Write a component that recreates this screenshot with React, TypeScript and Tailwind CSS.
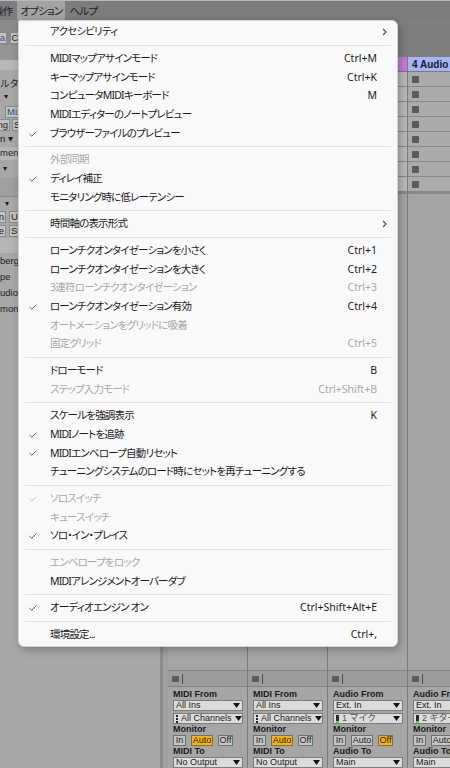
import React from "react";

type Item = {
  label: string;
  shortcut?: string;
  checked?: boolean;
  disabled?: boolean;
  submenu?: boolean;
};

const sections: Item[][] = [
  [{ label: "アクセシビリティ", submenu: true }],
  [
    { label: "MIDIマップアサインモード", shortcut: "Ctrl+M" },
    { label: "キーマップアサインモード", shortcut: "Ctrl+K" },
    { label: "コンピュータMIDIキーボード", shortcut: "M" },
    { label: "MIDIエディターのノートプレビュー" },
    { label: "ブラウザーファイルのプレビュー", checked: true },
  ],
  [
    { label: "外部同期", disabled: true },
    { label: "ディレイ補正", checked: true },
    { label: "モニタリング時に低レーテンシー" },
  ],
  [{ label: "時間軸の表示形式", submenu: true }],
  [
    { label: "ローンチクオンタイゼーションを小さく", shortcut: "Ctrl+1" },
    { label: "ローンチクオンタイゼーションを大きく", shortcut: "Ctrl+2" },
    { label: "3連符ローンチクオンタイゼーション", shortcut: "Ctrl+3", disabled: true },
    { label: "ローンチクオンタイゼーション有効", shortcut: "Ctrl+4", checked: true },
    { label: "オートメーションをグリッドに吸着", disabled: true },
    { label: "固定グリッド", shortcut: "Ctrl+5", disabled: true },
  ],
  [
    { label: "ドローモード", shortcut: "B" },
    { label: "ステップ入力モード", shortcut: "Ctrl+Shift+B", disabled: true },
  ],
  [
    { label: "スケールを強調表示", shortcut: "K" },
    { label: "MIDIノートを追跡", checked: true },
    { label: "MIDIエンベロープ自動リセット", checked: true },
    { label: "チューニングシステムのロード時にセットを再チューニングする" },
  ],
  [
    { label: "ソロスイッチ", checked: true, disabled: true },
    { label: "キュースイッチ", disabled: true },
    { label: "ソロ・イン・プレイス", checked: true },
  ],
  [
    { label: "エンベロープをロック", disabled: true },
    { label: "MIDIアレンジメントオーバーダブ" },
  ],
  [{ label: "オーディオエンジン オン", shortcut: "Ctrl+Shift+Alt+E", checked: true }],
  [{ label: "環境設定...", shortcut: "Ctrl+," }],
];

type Track = {
  name: string;
  color: string;
  slot: string;
  audio: boolean;
  from: string;
  sub: string;
  monitor: "In" | "Auto" | "Off";
  to: string;
};

const tracks: Track[] = [
  { name: "1 MIDI", color: "bg-[#ffa54f]", slot: "bg-[#ababab]", audio: false, from: "All Ins", sub: "All Channels", monitor: "Auto", to: "No Output" },
  { name: "2 MIDI", color: "bg-[#f0dd55]", slot: "bg-[#ababab]", audio: false, from: "All Ins", sub: "All Channels", monitor: "Auto", to: "No Output" },
  { name: "3 Audio", color: "bg-[#c57ad6]", slot: "bg-[#bababa]", audio: true, from: "Ext. In", sub: "1 マイク", monitor: "Off", to: "Main" },
  { name: "4 Audio", color: "bg-[#a6b5fa]", slot: "bg-[#ababab]", audio: true, from: "Ext. In", sub: "2 ギター", monitor: "Off", to: "Main" },
];

const jp = "font-['Noto_Sans','Noto_Sans_CJK_JP',sans-serif] [font-feature-settings:'palt']";

function Check({ dim }: { dim?: boolean }) {
  return (
    <svg width="8" height="6" viewBox="0 0 8 6" className={dim ? "text-[#bdbdbd]" : "text-[#4a4a4a]"}>
      <path d="M0.6 3.1 L2.8 5.2 L7.4 0.6" fill="none" stroke="currentColor" strokeWidth="0.9" />
    </svg>
  );
}

function Chevron() {
  return (
    <svg width="5" height="8" viewBox="0 0 5 8" className="text-[#444]">
      <path d="M1 0.8 L4 4 L1 7.2" fill="none" stroke="currentColor" strokeWidth="1.1" />
    </svg>
  );
}

function MenuItem({ item }: { item: Item }) {
  const color = item.disabled ? "text-[#a8a8a8]" : "text-[#1b1b1b]";
  return (
    <div className={`flex h-[18.67px] items-center pr-[10px] ${color}`}>
      <span className="flex w-[31px] shrink-0 pl-[10px]">{item.checked && <Check dim={item.disabled} />}</span>
      <span className="flex-1 whitespace-nowrap tracking-[-0.8px]">{item.label}</span>
      {item.shortcut && <span className="whitespace-nowrap">{item.shortcut}</span>}
      <span className="flex w-[10px] shrink-0 justify-end">{item.submenu && <Chevron />}</span>
    </div>
  );
}

function OptionsMenu() {
  return (
    <div
      className={`absolute left-[18px] top-[20px] w-[380px] rounded-[6px] rounded-tl-[2px] border border-[#d2d2d2] bg-[#f9f9f9] py-[2px] text-[10.5px] shadow-[2px_3px_8px_rgba(0,0,0,0.28)] ${jp}`}
    >
      {sections.map((sec, i) => (
        <div key={i}>
          {i > 0 && (
            <div className="flex h-[8px] items-center px-[6px]">
              <div className="h-px w-full bg-[#e2e2e2]" />
            </div>
          )}
          {sec.map((item) => (
            <MenuItem key={item.label} item={item} />
          ))}
        </div>
      ))}
    </div>
  );
}

function MenuBar() {
  return (
    <div className={`flex h-[20px] items-stretch border-t border-[#b9b9b9] bg-[#7d7d7d] text-[10.5px] tracking-[-0.8px] text-[#1e1e1e] ${jp}`}>
      <span className="-ml-[7px] flex items-center whitespace-nowrap pt-[2px]">操作</span>
      <span className="ml-[5px] flex w-[48px] items-center justify-center whitespace-nowrap bg-[#a3a3a3] pt-[2px]">オプション</span>
      <span className="ml-[4px] flex items-center whitespace-nowrap pt-[2px]">ヘルプ</span>
    </div>
  );
}

function StripButton({ children, className }: { children: React.ReactNode; className: string }) {
  return (
    <span className={`flex h-[12px] items-center overflow-hidden whitespace-nowrap border border-[#8a8a8a] bg-[#c3c3c3] px-[1px] ${className}`}>
      {children}
    </span>
  );
}

function LeftPanel() {
  return (
    <div className="flex w-[160px] shrink-0 flex-col bg-[#a8a8a8] font-['Liberation_Sans','Noto_Sans_CJK_JP',sans-serif] text-[9.5px] text-[#1c1c1c]">
      <div className="flex h-[25px] items-end gap-[3px] bg-[#8b8b8b] pb-[1px]">
        <StripButton className="-ml-[2px] w-[9px] justify-end bg-[#bcc6d8] text-[#2f58a0]">a</StripButton>
        <StripButton className="w-[10px] justify-center">C</StripButton>
      </div>
      <div className="h-[15px] bg-[#959595]" />
      <div className="h-[10px] bg-[#b8b8b8]" />
      <div className="h-[8px]" />
      <div className="flex h-[12px] items-center whitespace-nowrap">ルター ▾</div>
      <div className="flex h-[14px] items-center pl-[4px] text-[8px]">▾</div>
      <div className="flex h-[14px] items-end pl-[5px]">
        <StripButton className="w-[16px] text-[#2f4f8f]">Mix</StripButton>
      </div>
      <div className="flex h-[14px] items-center gap-[2px]">
        <StripButton className="-ml-[1px] w-[11px] justify-end">ng</StripButton>
        <StripButton className="w-[9px]">S</StripButton>
      </div>
      <div className="flex h-[15px] items-center whitespace-nowrap">n ▾</div>
      <div className="flex h-[13px] items-center whitespace-nowrap bg-[#b6b6b6]">ment</div>
      <div className="flex h-[18px] items-center pl-[3px] text-[8px]">▾</div>
      <div className="h-[19px] border-b border-[#8c8c8c] bg-[#9f9f9f]" />
      <div className="flex h-[13px] items-center pl-[5px] text-[8px]">▾</div>
      <div className="flex h-[14px] items-center gap-[3px]">
        <StripButton className="-ml-[1px] w-[7px] justify-end">n</StripButton>
        <StripButton className="w-[10px]">U</StripButton>
      </div>
      <div className="flex h-[14px] items-center gap-[3px]">
        <StripButton className="-ml-[1px] w-[7px] justify-end">e</StripButton>
        <StripButton className="w-[10px]">St</StripButton>
      </div>
      <div className="h-[15px] bg-[#b5b5b5]" />
      <div className="flex h-[16px] items-center whitespace-nowrap">berg</div>
      <div className="flex h-[16px] items-center whitespace-nowrap">pe</div>
      <div className="flex h-[16px] items-center whitespace-nowrap">udio</div>
      <div className="flex h-[16px] items-center whitespace-nowrap">mony</div>
      <div className="flex-1" />
    </div>
  );
}

function Arrow() {
  return (
    <svg width="7" height="5" viewBox="0 0 7 5" className="shrink-0">
      <path d="M0 0 H7 L3.5 5 Z" fill="#111" />
    </svg>
  );
}

function Dropdown({ label, icon }: { label: string; icon?: "channels" | "meter" }) {
  return (
    <div className="flex h-[11px] items-center gap-[3px] border border-[#7c7c7c] bg-[#dcdcdc] pl-[2px] pr-[2px] leading-none">
      {icon === "channels" && (
        <span className="flex h-[8px] w-[2px] flex-col justify-between">
          <span className="h-[2px] w-[2px] bg-[#222]" />
          <span className="h-[2px] w-[2px] bg-[#222]" />
          <span className="h-[2px] w-[2px] bg-[#222]" />
        </span>
      )}
      {icon === "meter" && (
        <span className="flex h-[8px] w-[3px] flex-col justify-end bg-[#2a2a2a]">
          <span className="h-[2px] w-[3px] bg-[#3ee060]" />
        </span>
      )}
      <span className={`flex-1 whitespace-nowrap ${icon === "meter" ? "text-[#555]" : ""}`}>{label}</span>
      <Arrow />
    </div>
  );
}

function MonitorButton({ label, active, width }: { label: string; active: boolean; width: string }) {
  return (
    <span
      className={`flex h-[11px] items-center justify-center border border-[#707070] leading-none ${width} ${
        active ? "bg-[#fcb400]" : "bg-[#c6c6c6]"
      }`}
    >
      {label}
    </span>
  );
}

function TrackColumn({ track }: { track: Track }) {
  return (
    <div className="flex w-[80px] shrink-0 flex-col border-r-[1.5px] border-[#7b7b7b] font-['Liberation_Sans','Noto_Sans_CJK_JP',sans-serif] text-[9px] text-[#1a1a1a]">
      <div className="h-[37px] bg-[#7f7f7f]" />
      <div className={`flex h-[15px] items-center border-b border-[#7b7b7b] pl-[4px] text-[10px] font-bold ${track.color}`}>
        {track.name}
      </div>
      {Array.from({ length: 8 }).map((_, i) => (
        <div key={i} className={`flex h-[15px] items-center border-b border-[#8a8a8a] pl-[4px] ${track.slot}`}>
          <span className="h-[7px] w-[7px] rounded-[1px] bg-[#5a5a5a]" />
        </div>
      ))}
      <div className="h-[2px] bg-[#8a8a8a]" />
      <div className="flex-1 bg-[#a6a6a6]" />
      <div className="flex h-[98px] flex-col overflow-hidden bg-[#a6a6a6]">
        <div className="flex h-[17px] shrink-0 items-center border-y border-[#858585] bg-[#9d9d9d] pl-[4px]">
          <span className="h-[6px] w-[7px] bg-[#5c5c5c]" />
          <span className="ml-[3px] h-[10px] w-px bg-[#4a4a4a]" />
        </div>
        <div className="flex flex-col pl-[5px] pr-[4px] pt-[1px]">
          <div className="h-[12px] font-bold leading-[12px]">{track.audio ? "Audio From" : "MIDI From"}</div>
          <Dropdown label={track.from} />
          <div className="mt-[2px]">
            <Dropdown label={track.sub} icon={track.audio ? "meter" : "channels"} />
          </div>
          <div className="h-[11px] font-bold leading-[11px]">Monitor</div>
          <div className="flex gap-[5px]">
            <MonitorButton label="In" active={track.monitor === "In"} width="w-[13px]" />
            <MonitorButton label="Auto" active={track.monitor === "Auto"} width="w-[22px]" />
            <MonitorButton label="Off" active={track.monitor === "Off"} width="w-[15px]" />
          </div>
          <div className="h-[11px] font-bold leading-[11px]">{track.audio ? "Audio To" : "MIDI To"}</div>
          <Dropdown label={track.to} />
        </div>
      </div>
    </div>
  );
}

export default function App() {
  return (
    <div className="relative h-[768px] w-[450px] overflow-hidden bg-[#a7a7a7]">
      <MenuBar />
      <div className="flex h-[748px]">
        <LeftPanel />
        <div className="w-[8px] shrink-0 border-l-[3px] border-[#8c8c8c] bg-[#a0a0a0]" />
        <div className="flex">
          {tracks.map((t) => (
            <TrackColumn key={t.name} track={t} />
          ))}
        </div>
      </div>
      <OptionsMenu />
    </div>
  );
}
